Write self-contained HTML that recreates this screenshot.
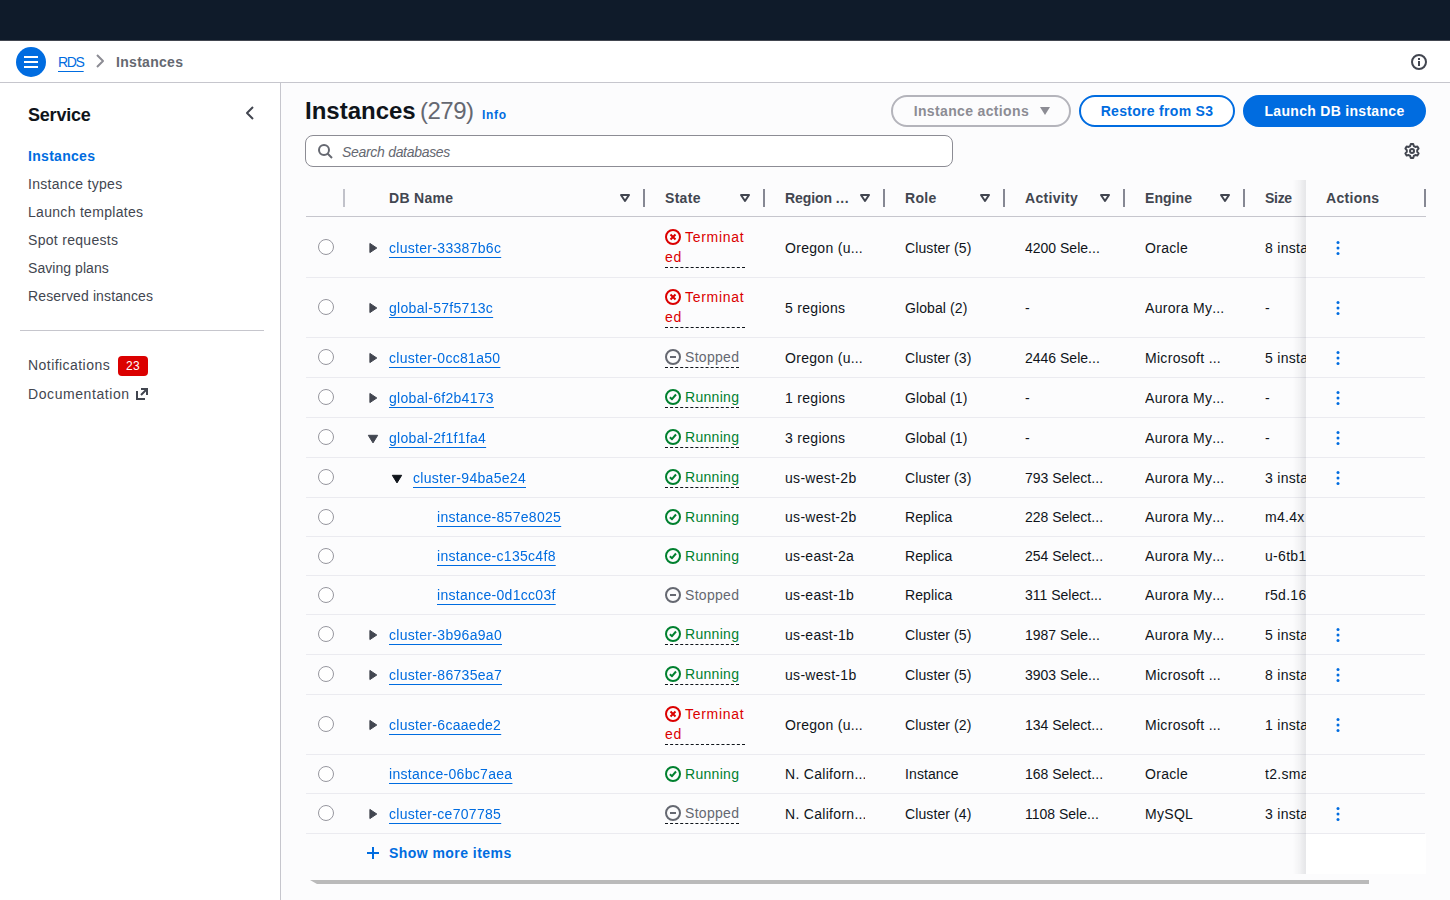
<!DOCTYPE html>
<html lang="en">
<head>
<meta charset="utf-8">
<title>Instances</title>
<style>
*{box-sizing:border-box;}
html,body{margin:0;padding:0;}
body{width:1450px;height:900px;overflow:hidden;background:#fff;font-family:"Liberation Sans",sans-serif;font-size:14px;line-height:20px;color:#0f141a;position:relative;letter-spacing:.3px;}
a{color:#006ce0;text-underline-offset:4px;text-decoration-thickness:1px;}
svg{display:block;overflow:visible;}
.ic{fill:none;stroke:currentColor;stroke-width:2;stroke-linejoin:round;stroke-linecap:butt;}
.abs{position:absolute;}
/* top nav */
#topnav{position:absolute;left:0;top:0;width:1450px;height:41px;background:#0f1b2a;border-bottom:1px solid #424650;}
#toolbar{position:absolute;left:0;top:41px;width:1450px;height:42px;background:#fff;border-bottom:1px solid #c6c6cd;}
#burger{position:absolute;left:16px;top:6px;width:30px;height:30px;border-radius:50%;background:#006ce0;color:#fff;}
#burger svg{position:absolute;left:7px;top:7px;}
#bc{position:absolute;left:58px;top:11px;height:20px;white-space:nowrap;}
#bc a{position:absolute;left:0;top:0;letter-spacing:-1.3px;}
#bc .chev{position:absolute;left:34px;top:1px;color:#8c8c94;}
#bc .cur{position:absolute;left:58px;top:0;font-weight:bold;color:#656871;}
#infoic{position:absolute;left:1411px;top:13px;color:#424650;}
/* side nav */
#nav{position:absolute;left:0;top:83px;width:281px;height:817px;background:#fff;border-right:1px solid #c6c6cd;}
#nav h2{position:absolute;left:28px;top:21px;margin:0;font-size:18px;line-height:22px;font-weight:bold;color:#0f141a;letter-spacing:-.2px;}
#nav .collapse{position:absolute;left:242px;top:22px;color:#424650;}
#nav .lk{position:absolute;left:28px;color:#424650;white-space:nowrap;}
#nav .lk.active{color:#006ce0;font-weight:bold;}
#nav hr{position:absolute;left:20px;top:247px;width:244px;border:0;border-top:1px solid #c6c6cd;margin:0;}
.badge{position:absolute;left:118px;top:273px;width:30px;height:20px;border-radius:4px;background:#db0000;color:#fff;font-size:12px;line-height:20px;text-align:center;}
/* main */
#main{position:absolute;left:281px;top:83px;width:1169px;height:817px;background:#fcfcfd;}
h1{position:absolute;left:24px;top:13px;margin:0;font-size:24px;line-height:30px;font-weight:bold;white-space:nowrap;color:#0f141a;letter-spacing:0;}
h1 .cnt{font-weight:normal;color:#656871;letter-spacing:-.5px;position:absolute;left:115px;top:0;}
h1 .info{font-size:12px;font-weight:bold;color:#006ce0;letter-spacing:.7px;position:absolute;left:177px;top:4px;}
.btn{position:absolute;top:12px;height:32px;border-radius:16px;border:2px solid #006ce0;font-weight:bold;font-size:14px;line-height:28px;text-align:center;white-space:nowrap;color:#006ce0;background:#fff;}
.btn.dis{border-color:#b4b4bb;color:#8c8c94;background:transparent;}
.btn.pri{background:#006ce0;color:#fff;}
#search{position:absolute;left:24px;top:52px;width:648px;height:32px;border:1px solid #8c8c94;border-radius:8px;background:#fff;}
#search svg{position:absolute;left:11px;top:7px;color:#656871;}
#search span{position:absolute;left:36px;top:6px;font-style:italic;color:#656871;letter-spacing:-.3px;}
#gear{position:absolute;left:1123px;top:60px;color:#424650;}

/* table */
#tw{position:absolute;left:24px;top:97px;width:1121px;height:700px;overflow:hidden;}
#tw:before{content:"";position:absolute;left:0;top:0;width:1px;height:100%;background:#fcfcfd;z-index:3;}
#tw:after{content:"";position:absolute;right:0;top:37px;width:1px;height:617px;background:#fcfcfd;z-index:3;}
#tb{border-collapse:separate;border-spacing:0;table-layout:fixed;width:1180px;}
#tb th{height:37px;padding:0;border-bottom:1px solid #c6c6cd;text-align:left;font-weight:bold;color:#424650;position:relative;background:#fcfcfd;white-space:nowrap;}
#tb th .ht{position:absolute;left:20px;top:8px;}
#tb th.first .ht{left:44px;}
#tb th .sort{position:absolute;right:12px;top:10px;color:#424650;}
#tb th .dv{position:absolute;right:0;top:9px;width:2px;height:18px;background:#868893;}
#tb th.sel .dv{background:#c1c2ca;}
#tb th:nth-child(4) .ht{letter-spacing:-.1px;}
#tb th:nth-child(4) .el{letter-spacing:.7px;}
#tb th:nth-child(7) .ht{letter-spacing:.05px;}
#tb th:nth-child(8) .ht{letter-spacing:-.3px;}
#tb td{padding:9px 20px 9px 20px;border-bottom:1px solid #ebebf0;vertical-align:middle;white-space:nowrap;overflow:hidden;height:40px;}
#tb tr.r0 td{border-top:1px solid transparent;}
#tb tr.leaf td{height:39px;}
#tb td.sel{padding:0;position:relative;}
.radio{position:absolute;left:13px;top:50%;margin-top:-8.3px;width:16px;height:16px;border-radius:50%;border:1px solid #96969e;background:#fff;}
#tb td.nm{position:relative;}
#tb td.nm .tg{display:inline-block;width:24px;height:20px;vertical-align:top;position:relative;}
#tb td.nm .tg svg{position:absolute;left:0;top:2px;}
.tog{fill:#424650;stroke:#424650;stroke-width:1;stroke-linejoin:round;}
.tog.dk{fill:#0f141a;stroke:#0f141a;}
#tb td.nm a{display:inline-block;vertical-align:top;text-underline-offset:4px;text-decoration-thickness:1px;}
.st{display:inline-block;vertical-align:top;max-width:100%;border-bottom:1px dashed #0f141a;white-space:normal;}
.st.nd{border-bottom:0;}
.st .si{display:inline-block;vertical-align:top;margin:2px 4px 0 0;}
.st.neg{color:#db0000;letter-spacing:.7px;display:block;}
#tb td:nth-child(5){letter-spacing:.1px;}
#tb td:nth-child(6){letter-spacing:0;}
.el{letter-spacing:.1px;}
th .el{letter-spacing:1px;}
.st.pos{color:#00802f;}
.st.stop{color:#656871;}
.tx{overflow:hidden;white-space:nowrap;}
#tb td.act,#tb th.act{position:sticky;right:0;background:#fcfcfd;}
#shadow{position:absolute;left:987px;top:0;width:14px;height:694px;background:linear-gradient(to right,rgba(0,7,22,0) 0%,rgba(0,7,22,.006) 15%,rgba(0,7,22,.02) 35%,rgba(0,7,22,.045) 60%,rgba(0,7,22,.07) 82%,rgba(0,7,22,.085) 100%);pointer-events:none;}
#tb td.act{padding:0 0 0 24px;}
.kebab{fill:#006ce0;}
#tb tr.more td{height:40px;border-bottom:0;padding-top:8px;padding-bottom:11px;}
#tb tr.more td.act{background:#fff;}
#tb tr.more span{font-weight:bold;color:#006ce0;vertical-align:top;display:inline-block;letter-spacing:.45px;}
#tb tr.more .plus{display:inline-block;vertical-align:top;color:#006ce0;margin:2px 8px 0 0;}
#tb tr.more td[colspan]{padding-left:20px;}
#sbar{position:absolute;left:29px;top:797px;width:1059px;height:4px;background:#bababa;clip-path:polygon(0 0,100% 0,100% 100%,7px 100%);}
</style>
</head>
<body>
<div id="topnav"></div>
<div id="toolbar">
  <div id="burger"><svg width="16" height="16" viewBox="0 0 16 16" class="ic"><path d="M1 3h14M1 8h14M1 13h14"/></svg></div>
  <div id="bc"><a href="#">RDS</a><svg class="ic chev" width="16" height="16" viewBox="0 0 16 16"><path d="m5 2 6 6-6 6"/></svg><span class="cur">Instances</span></div>
  <svg id="infoic" class="ic" width="16" height="16" viewBox="0 0 16 16"><circle cx="8" cy="8" r="7"/><path d="M8 7v5M8 4v2"/></svg>
</div>
<div id="nav">
  <h2>Service</h2>
  <svg class="ic collapse" width="16" height="16" viewBox="0 0 16 16"><path d="M11 2 5 8l6 6"/></svg>
  <span class="lk active" style="top:63px">Instances</span>
  <span class="lk" style="top:91px">Instance types</span>
  <span class="lk" style="top:119px">Launch templates</span>
  <span class="lk" style="top:147px">Spot requests</span>
  <span class="lk" style="top:175px;letter-spacing:.05px">Saving plans</span>
  <span class="lk" style="top:203px;letter-spacing:.12px">Reserved instances</span>
  <hr>
  <span class="lk" style="top:272px;letter-spacing:.45px">Notifications</span>
  <span class="badge">23</span>
  <span class="lk" style="top:301px;letter-spacing:.58px">Documentation</span>
  <svg class="ic abs" style="left:135px;top:304px;color:#424650;stroke-linejoin:miter" width="14" height="14" viewBox="0 0 14 14"><path d="M2 4V12H10M6 2H12V8M12 2L6 8"/></svg>
</div>
<div id="main">
  <h1>Instances <span class="cnt">(279)</span> <span class="info">Info</span></h1>
  <div class="btn dis" style="left:610px;width:180px;text-indent:2px;letter-spacing:.35px;">Instance actions <span style="display:inline-block;width:0;height:0;border-left:5px solid transparent;border-right:5px solid transparent;border-top:8px solid #8c8c94;margin-left:7px;position:relative;top:-.6px;"></span></div>
  <div class="btn" style="left:798px;width:156px;">Restore from S3</div>
  <div class="btn pri" style="left:962px;width:183px;">Launch DB instance</div>
  <div id="search"><svg class="ic" width="16" height="16" viewBox="0 0 16 16"><circle cx="7" cy="7" r="5"/><path d="m15 15-4.5-4.5"/></svg><span>Search databases</span></div>
  <svg id="gear" class="ic" width="16" height="16" viewBox="0 0 16 16"><path d="M6.19 3.02 L6.78 1.11 L9.22 1.11 L9.81 3.02 L11.41 3.94 L13.36 3.5 L14.58 5.61 L13.22 7.08 L13.22 8.92 L14.58 10.39 L13.36 12.5 L11.41 12.06 L9.81 12.98 L9.22 14.89 L6.78 14.89 L6.19 12.98 L4.59 12.06 L2.64 12.5 L1.42 10.39 L2.78 8.92 L2.78 7.08 L1.42 5.61 L2.64 3.5 L4.59 3.94Z"/><circle cx="8" cy="8" r="2"/></svg>
  <div id="tw"><table id="tb"><colgroup><col style="width:40px"><col style="width:300px"><col style="width:120px"><col style="width:120px"><col style="width:120px"><col style="width:120px"><col style="width:120px"><col style="width:120px"><col style="width:120px"></colgroup>
<thead><tr><th class="sel"><i class="dv"></i></th>
<th class="h first"><span class="ht">DB Name</span><svg class="ic sort" width="16" height="16" viewBox="0 0 16 16"><path d="M4 5h8l-4 6-4-6z"/></svg><i class="dv"></i></th>
<th class="h"><span class="ht">State</span><svg class="ic sort" width="16" height="16" viewBox="0 0 16 16"><path d="M4 5h8l-4 6-4-6z"/></svg><i class="dv"></i></th>
<th class="h"><span class="ht">Region <span class="el">...</span></span><svg class="ic sort" width="16" height="16" viewBox="0 0 16 16"><path d="M4 5h8l-4 6-4-6z"/></svg><i class="dv"></i></th>
<th class="h"><span class="ht">Role</span><svg class="ic sort" width="16" height="16" viewBox="0 0 16 16"><path d="M4 5h8l-4 6-4-6z"/></svg><i class="dv"></i></th>
<th class="h"><span class="ht">Activity</span><svg class="ic sort" width="16" height="16" viewBox="0 0 16 16"><path d="M4 5h8l-4 6-4-6z"/></svg><i class="dv"></i></th>
<th class="h"><span class="ht">Engine</span><svg class="ic sort" width="16" height="16" viewBox="0 0 16 16"><path d="M4 5h8l-4 6-4-6z"/></svg><i class="dv"></i></th>
<th class="h"><span class="ht">Size</span></th>
<th class="h act"><span class="ht">Actions</span><i class="dv"></i></th></tr></thead><tbody>
<tr class="r0">
<td class="sel"><span class="radio"></span></td>
<td class="nm" style="padding-left:20px"><span class="tg"><svg class="tog" width="16" height="16" viewBox="0 0 16 16"><path d="M4.9 3.4v9.2l6.9-4.6z"/></svg></span><a href="#">cluster-33387b6c</a></td>
<td><div class="st neg"><svg class="ic si" width="16" height="16" viewBox="0 0 16 16"><circle cx="8" cy="8" r="7"/><path d="m10.5 5.5-5 5M10.5 10.5l-5-5" stroke-width="2"/></svg><span>Terminat<br>ed</span></div></td>
<td><div class="tx">Oregon (u<span class="el">...</span></div></td>
<td><div class="tx">Cluster (5)</div></td>
<td><div class="tx">4200 Sele<span class="el">...</span></div></td>
<td><div class="tx">Oracle</div></td>
<td><div class="tx nc">8 instances</div></td>
<td class="act"><svg class="kebab" width="16" height="16" viewBox="0 0 16 16"><circle cx="8" cy="2.5" r="1.5"/><circle cx="8" cy="8" r="1.5"/><circle cx="8" cy="13.5" r="1.5"/></svg></td>
</tr>
<tr class="">
<td class="sel"><span class="radio"></span></td>
<td class="nm" style="padding-left:20px"><span class="tg"><svg class="tog" width="16" height="16" viewBox="0 0 16 16"><path d="M4.9 3.4v9.2l6.9-4.6z"/></svg></span><a href="#">global-57f5713c</a></td>
<td><div class="st neg"><svg class="ic si" width="16" height="16" viewBox="0 0 16 16"><circle cx="8" cy="8" r="7"/><path d="m10.5 5.5-5 5M10.5 10.5l-5-5" stroke-width="2"/></svg><span>Terminat<br>ed</span></div></td>
<td><div class="tx">5 regions</div></td>
<td><div class="tx">Global (2)</div></td>
<td><div class="tx">-</div></td>
<td><div class="tx">Aurora My<span class="el">...</span></div></td>
<td><div class="tx nc">-</div></td>
<td class="act"><svg class="kebab" width="16" height="16" viewBox="0 0 16 16"><circle cx="8" cy="2.5" r="1.5"/><circle cx="8" cy="8" r="1.5"/><circle cx="8" cy="13.5" r="1.5"/></svg></td>
</tr>
<tr class="">
<td class="sel"><span class="radio"></span></td>
<td class="nm" style="padding-left:20px"><span class="tg"><svg class="tog" width="16" height="16" viewBox="0 0 16 16"><path d="M4.9 3.4v9.2l6.9-4.6z"/></svg></span><a href="#">cluster-0cc81a50</a></td>
<td><div class="st stop"><svg class="ic si" width="16" height="16" viewBox="0 0 16 16"><circle cx="8" cy="8" r="7"/><path d="M11 8H5"/></svg><span>Stopped</span></div></td>
<td><div class="tx">Oregon (u<span class="el">...</span></div></td>
<td><div class="tx">Cluster (3)</div></td>
<td><div class="tx">2446 Sele<span class="el">...</span></div></td>
<td><div class="tx">Microsoft <span class="el">...</span></div></td>
<td><div class="tx nc">5 instances</div></td>
<td class="act"><svg class="kebab" width="16" height="16" viewBox="0 0 16 16"><circle cx="8" cy="2.5" r="1.5"/><circle cx="8" cy="8" r="1.5"/><circle cx="8" cy="13.5" r="1.5"/></svg></td>
</tr>
<tr class="">
<td class="sel"><span class="radio"></span></td>
<td class="nm" style="padding-left:20px"><span class="tg"><svg class="tog" width="16" height="16" viewBox="0 0 16 16"><path d="M4.9 3.4v9.2l6.9-4.6z"/></svg></span><a href="#">global-6f2b4173</a></td>
<td><div class="st pos"><svg class="ic si" width="16" height="16" viewBox="0 0 16 16"><circle cx="8" cy="8" r="7"/><path d="m4.9 8.2 2.1 2 4-4.7"/></svg><span>Running</span></div></td>
<td><div class="tx">1 regions</div></td>
<td><div class="tx">Global (1)</div></td>
<td><div class="tx">-</div></td>
<td><div class="tx">Aurora My<span class="el">...</span></div></td>
<td><div class="tx nc">-</div></td>
<td class="act"><svg class="kebab" width="16" height="16" viewBox="0 0 16 16"><circle cx="8" cy="2.5" r="1.5"/><circle cx="8" cy="8" r="1.5"/><circle cx="8" cy="13.5" r="1.5"/></svg></td>
</tr>
<tr class="">
<td class="sel"><span class="radio"></span></td>
<td class="nm" style="padding-left:20px"><span class="tg"><svg class="tog" width="16" height="16" viewBox="0 0 16 16"><path d="M3.3 5.3h9.4l-4.7 7.6z"/></svg></span><a href="#">global-2f1f1fa4</a></td>
<td><div class="st pos"><svg class="ic si" width="16" height="16" viewBox="0 0 16 16"><circle cx="8" cy="8" r="7"/><path d="m4.9 8.2 2.1 2 4-4.7"/></svg><span>Running</span></div></td>
<td><div class="tx">3 regions</div></td>
<td><div class="tx">Global (1)</div></td>
<td><div class="tx">-</div></td>
<td><div class="tx">Aurora My<span class="el">...</span></div></td>
<td><div class="tx nc">-</div></td>
<td class="act"><svg class="kebab" width="16" height="16" viewBox="0 0 16 16"><circle cx="8" cy="2.5" r="1.5"/><circle cx="8" cy="8" r="1.5"/><circle cx="8" cy="13.5" r="1.5"/></svg></td>
</tr>
<tr class="">
<td class="sel"><span class="radio"></span></td>
<td class="nm" style="padding-left:44px"><span class="tg"><svg class="tog dk" width="16" height="16" viewBox="0 0 16 16"><path d="M3.3 5.3h9.4l-4.7 7.6z"/></svg></span><a href="#">cluster-94ba5e24</a></td>
<td><div class="st pos"><svg class="ic si" width="16" height="16" viewBox="0 0 16 16"><circle cx="8" cy="8" r="7"/><path d="m4.9 8.2 2.1 2 4-4.7"/></svg><span>Running</span></div></td>
<td><div class="tx">us-west-2b</div></td>
<td><div class="tx">Cluster (3)</div></td>
<td><div class="tx">793 Select<span class="el">...</span></div></td>
<td><div class="tx">Aurora My<span class="el">...</span></div></td>
<td><div class="tx nc">3 instances</div></td>
<td class="act"><svg class="kebab" width="16" height="16" viewBox="0 0 16 16"><circle cx="8" cy="2.5" r="1.5"/><circle cx="8" cy="8" r="1.5"/><circle cx="8" cy="13.5" r="1.5"/></svg></td>
</tr>
<tr class="leaf">
<td class="sel"><span class="radio"></span></td>
<td class="nm" style="padding-left:68px"><span class="tg"></span><a href="#">instance-857e8025</a></td>
<td><div class="st pos nd"><svg class="ic si" width="16" height="16" viewBox="0 0 16 16"><circle cx="8" cy="8" r="7"/><path d="m4.9 8.2 2.1 2 4-4.7"/></svg><span>Running</span></div></td>
<td><div class="tx">us-west-2b</div></td>
<td><div class="tx">Replica</div></td>
<td><div class="tx">228 Select<span class="el">...</span></div></td>
<td><div class="tx">Aurora My<span class="el">...</span></div></td>
<td><div class="tx nc">m4.4x</div></td>
<td class="act"></td>
</tr>
<tr class="leaf">
<td class="sel"><span class="radio"></span></td>
<td class="nm" style="padding-left:68px"><span class="tg"></span><a href="#">instance-c135c4f8</a></td>
<td><div class="st pos nd"><svg class="ic si" width="16" height="16" viewBox="0 0 16 16"><circle cx="8" cy="8" r="7"/><path d="m4.9 8.2 2.1 2 4-4.7"/></svg><span>Running</span></div></td>
<td><div class="tx">us-east-2a</div></td>
<td><div class="tx">Replica</div></td>
<td><div class="tx">254 Select<span class="el">...</span></div></td>
<td><div class="tx">Aurora My<span class="el">...</span></div></td>
<td><div class="tx nc">u-6tb1.metal</div></td>
<td class="act"></td>
</tr>
<tr class="leaf">
<td class="sel"><span class="radio"></span></td>
<td class="nm" style="padding-left:68px"><span class="tg"></span><a href="#">instance-0d1cc03f</a></td>
<td><div class="st stop nd"><svg class="ic si" width="16" height="16" viewBox="0 0 16 16"><circle cx="8" cy="8" r="7"/><path d="M11 8H5"/></svg><span>Stopped</span></div></td>
<td><div class="tx">us-east-1b</div></td>
<td><div class="tx">Replica</div></td>
<td><div class="tx">311 Select<span class="el">...</span></div></td>
<td><div class="tx">Aurora My<span class="el">...</span></div></td>
<td><div class="tx nc">r5d.16xlarge</div></td>
<td class="act"></td>
</tr>
<tr class="">
<td class="sel"><span class="radio"></span></td>
<td class="nm" style="padding-left:20px"><span class="tg"><svg class="tog" width="16" height="16" viewBox="0 0 16 16"><path d="M4.9 3.4v9.2l6.9-4.6z"/></svg></span><a href="#">cluster-3b96a9a0</a></td>
<td><div class="st pos"><svg class="ic si" width="16" height="16" viewBox="0 0 16 16"><circle cx="8" cy="8" r="7"/><path d="m4.9 8.2 2.1 2 4-4.7"/></svg><span>Running</span></div></td>
<td><div class="tx">us-east-1b</div></td>
<td><div class="tx">Cluster (5)</div></td>
<td><div class="tx">1987 Sele<span class="el">...</span></div></td>
<td><div class="tx">Aurora My<span class="el">...</span></div></td>
<td><div class="tx nc">5 instances</div></td>
<td class="act"><svg class="kebab" width="16" height="16" viewBox="0 0 16 16"><circle cx="8" cy="2.5" r="1.5"/><circle cx="8" cy="8" r="1.5"/><circle cx="8" cy="13.5" r="1.5"/></svg></td>
</tr>
<tr class="">
<td class="sel"><span class="radio"></span></td>
<td class="nm" style="padding-left:20px"><span class="tg"><svg class="tog" width="16" height="16" viewBox="0 0 16 16"><path d="M4.9 3.4v9.2l6.9-4.6z"/></svg></span><a href="#">cluster-86735ea7</a></td>
<td><div class="st pos"><svg class="ic si" width="16" height="16" viewBox="0 0 16 16"><circle cx="8" cy="8" r="7"/><path d="m4.9 8.2 2.1 2 4-4.7"/></svg><span>Running</span></div></td>
<td><div class="tx">us-west-1b</div></td>
<td><div class="tx">Cluster (5)</div></td>
<td><div class="tx">3903 Sele<span class="el">...</span></div></td>
<td><div class="tx">Microsoft <span class="el">...</span></div></td>
<td><div class="tx nc">8 instances</div></td>
<td class="act"><svg class="kebab" width="16" height="16" viewBox="0 0 16 16"><circle cx="8" cy="2.5" r="1.5"/><circle cx="8" cy="8" r="1.5"/><circle cx="8" cy="13.5" r="1.5"/></svg></td>
</tr>
<tr class="">
<td class="sel"><span class="radio"></span></td>
<td class="nm" style="padding-left:20px"><span class="tg"><svg class="tog" width="16" height="16" viewBox="0 0 16 16"><path d="M4.9 3.4v9.2l6.9-4.6z"/></svg></span><a href="#">cluster-6caaede2</a></td>
<td><div class="st neg"><svg class="ic si" width="16" height="16" viewBox="0 0 16 16"><circle cx="8" cy="8" r="7"/><path d="m10.5 5.5-5 5M10.5 10.5l-5-5" stroke-width="2"/></svg><span>Terminat<br>ed</span></div></td>
<td><div class="tx">Oregon (u<span class="el">...</span></div></td>
<td><div class="tx">Cluster (2)</div></td>
<td><div class="tx">134 Select<span class="el">...</span></div></td>
<td><div class="tx">Microsoft <span class="el">...</span></div></td>
<td><div class="tx nc">1 instances</div></td>
<td class="act"><svg class="kebab" width="16" height="16" viewBox="0 0 16 16"><circle cx="8" cy="2.5" r="1.5"/><circle cx="8" cy="8" r="1.5"/><circle cx="8" cy="13.5" r="1.5"/></svg></td>
</tr>
<tr class="leaf">
<td class="sel"><span class="radio"></span></td>
<td class="nm" style="padding-left:20px"><span class="tg"></span><a href="#">instance-06bc7aea</a></td>
<td><div class="st pos nd"><svg class="ic si" width="16" height="16" viewBox="0 0 16 16"><circle cx="8" cy="8" r="7"/><path d="m4.9 8.2 2.1 2 4-4.7"/></svg><span>Running</span></div></td>
<td><div class="tx">N. Californ<span class="el">...</span></div></td>
<td><div class="tx">Instance</div></td>
<td><div class="tx">168 Select<span class="el">...</span></div></td>
<td><div class="tx">Oracle</div></td>
<td><div class="tx nc">t2.small</div></td>
<td class="act"></td>
</tr>
<tr class="">
<td class="sel"><span class="radio"></span></td>
<td class="nm" style="padding-left:20px"><span class="tg"><svg class="tog" width="16" height="16" viewBox="0 0 16 16"><path d="M4.9 3.4v9.2l6.9-4.6z"/></svg></span><a href="#">cluster-ce707785</a></td>
<td><div class="st stop"><svg class="ic si" width="16" height="16" viewBox="0 0 16 16"><circle cx="8" cy="8" r="7"/><path d="M11 8H5"/></svg><span>Stopped</span></div></td>
<td><div class="tx">N. Californ<span class="el">...</span></div></td>
<td><div class="tx">Cluster (4)</div></td>
<td><div class="tx">1108 Sele<span class="el">...</span></div></td>
<td><div class="tx">MySQL</div></td>
<td><div class="tx nc">3 instances</div></td>
<td class="act"><svg class="kebab" width="16" height="16" viewBox="0 0 16 16"><circle cx="8" cy="2.5" r="1.5"/><circle cx="8" cy="8" r="1.5"/><circle cx="8" cy="13.5" r="1.5"/></svg></td>
</tr>
<tr class="more"><td class="sel"></td><td colspan="7"><svg class="ic plus" width="16" height="16" viewBox="0 0 16 16"><path d="M8 2v12M14 8H2"/></svg><span>Show more items</span></td><td class="act"></td></tr>
</tbody></table><div id="shadow"></div></div><div id="sbar"></div>
</div>
</body>
</html>
